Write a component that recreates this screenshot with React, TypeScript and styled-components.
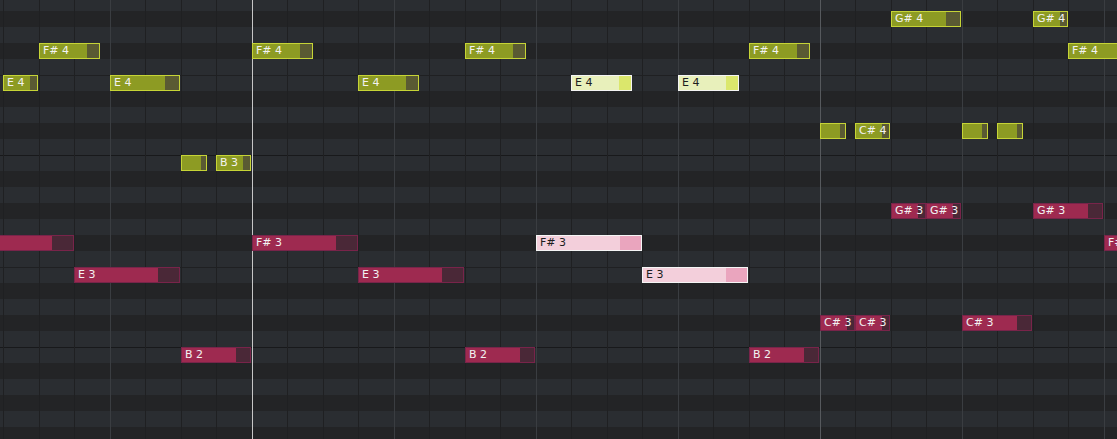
import styled, { createGlobalStyle } from "styled-components";

// piano roll viewport: A4 partially visible at the top, F#2 at the bottom
const BEAT = 35.5;
const ORIGIN_X = 3.5;
const ROW = 16;
const TOP_PITCH = 69; // A4
const ROW_COUNT = 28;
const NAMES = ["C", "C#", "D", "D#", "E", "F", "F#", "G", "G#", "A", "A#", "B"];

const xOf = (beat: number) => Math.floor(ORIGIN_X + BEAT * beat);
const isBlack = (pitch: number) => NAMES[pitch % 12].includes("#");
const labelOf = (pitch: number) => `${NAMES[pitch % 12]} ${Math.floor(pitch / 12) - 1}`;

type Tone = "hi" | "lo";

interface NoteData {
  pitch: number;
  beat: number;
  len: number;
  selected?: boolean;
}

const hiNotes: NoteData[] = [
  { pitch: 68, beat: 25, len: 2 },
  { pitch: 68, beat: 29, len: 1 },
  { pitch: 66, beat: 1, len: 1.75 },
  { pitch: 66, beat: 7, len: 1.75 },
  { pitch: 66, beat: 13, len: 1.75 },
  { pitch: 66, beat: 21, len: 1.75 },
  { pitch: 66, beat: 30, len: 2 },
  { pitch: 64, beat: 0, len: 1 },
  { pitch: 64, beat: 3, len: 2 },
  { pitch: 64, beat: 10, len: 1.75 },
  { pitch: 64, beat: 16, len: 1.75, selected: true },
  { pitch: 64, beat: 19, len: 1.75, selected: true },
  { pitch: 61, beat: 23, len: 0.75 },
  { pitch: 61, beat: 24, len: 1 },
  { pitch: 61, beat: 27, len: 0.75 },
  { pitch: 61, beat: 28, len: 0.75 },
  { pitch: 59, beat: 5, len: 0.75 },
  { pitch: 59, beat: 6, len: 1 },
];

const loNotes: NoteData[] = [
  { pitch: 56, beat: 25, len: 1 },
  { pitch: 56, beat: 26, len: 1 },
  { pitch: 56, beat: 29, len: 2 },
  { pitch: 54, beat: -1, len: 3 },
  { pitch: 54, beat: 7, len: 3 },
  { pitch: 54, beat: 15, len: 3, selected: true },
  { pitch: 54, beat: 31, len: 2 },
  { pitch: 52, beat: 2, len: 3 },
  { pitch: 52, beat: 10, len: 3 },
  { pitch: 52, beat: 18, len: 3, selected: true },
  { pitch: 49, beat: 23, len: 1 },
  { pitch: 49, beat: 24, len: 1 },
  { pitch: 49, beat: 27, len: 2 },
  { pitch: 47, beat: 5, len: 2 },
  { pitch: 47, beat: 13, len: 2 },
  { pitch: 47, beat: 21, len: 2 },
];

const palette = {
  hi: { fill: "#8d9b23", tail: "#5a5a33", border: "#c6d436", text: "#f2f2f2" },
  hiSel: { fill: "#e8f0bb", tail: "#dbe76c", border: "#f4f4f4", text: "#1e1e1e" },
  lo: { fill: "#9e2a50", tail: "#4a2837", border: "#78244a", text: "#f2f2f2" },
  loSel: { fill: "#f3cfdb", tail: "#eaa5be", border: "#f5f5f5", text: "#1e1e1e" },
};

const GlobalStyle = createGlobalStyle`
  html, body {
    margin: 0;
    padding: 0;
    background: #232426;
    overflow: hidden;
  }
`;

const Roll = styled.div`
  position: relative;
  width: 1117px;
  height: 439px;
  overflow: hidden;
  background: #232426;
  font-family: "DejaVu Sans", "Liberation Sans", sans-serif;
`;

const Lanes = styled.div`
  display: flex;
  flex-direction: column;
  margin-top: -5px;
`;

const Lane = styled.div<{ $black: boolean; $edge?: "octave" | "ef" }>`
  flex: none;
  height: ${ROW}px;
  background: ${(p) => (p.$black ? "#232426" : "#2a2d31")};
  box-shadow: ${(p) =>
    p.$edge === "octave"
      ? "inset 0 1px 0 #18191b"
      : p.$edge === "ef"
      ? "inset 0 1px 0 #1f2022"
      : "none"};
`;

const GridLine = styled.div<{ $kind: "beat" | "bar" | "section" | "cursor" }>`
  position: absolute;
  top: 0;
  bottom: 0;
  width: 1px;
  background: ${(p) =>
    ({
      beat: "#1f2022",
      bar: "#3a3d41",
      section: "#56595d",
      cursor: "#c6c6c6",
    }[p.$kind])};
`;

const Note = styled.div<{ $tone: keyof typeof palette; $tail: number }>`
  position: absolute;
  box-sizing: border-box;
  height: ${ROW}px;
  display: flex;
  align-items: center;
  padding-left: 3px;
  overflow: hidden;
  white-space: nowrap;
  border: 1px solid ${(p) => palette[p.$tone].border};
  background: ${(p) => {
    const c = palette[p.$tone];
    return `linear-gradient(to right, ${c.fill} ${100 - p.$tail}%, ${c.tail} ${100 - p.$tail}%)`;
  }};
  color: ${(p) => palette[p.$tone].text};
  font-size: 11px;
  line-height: 14px;
`;

function Grid() {
  const lines = [];
  for (let k = 0; k < 32; k++) {
    let kind: "beat" | "bar" | "section" | "cursor" = "beat";
    if (k % 4 === 3) kind = "bar";
    if (k === 23) kind = "section";
    if (k === 7) kind = "cursor";
    lines.push(<GridLine key={k} $kind={kind} style={{ left: xOf(k) }} />);
  }
  return <>{lines}</>;
}

function Notes({ notes, tone }: { notes: NoteData[]; tone: Tone }) {
  return (
    <>
      {notes.map((n, i) => {
        const left = xOf(n.beat);
        const width = Math.round(n.len * BEAT - 1);
        const top = -5 + (TOP_PITCH - n.pitch) * ROW;
        const key = n.selected ? (tone === "hi" ? "hiSel" : "loSel") : tone;
        // labels of notes that start before the view or are too short stay hidden
        const showLabel = width >= 30 && left >= 0;
        return (
          <Note key={i} $tone={key} $tail={20} style={{ left, top, width }}>
            {showLabel ? labelOf(n.pitch) : null}
          </Note>
        );
      })}
    </>
  );
}

export default function App() {
  const rows = Array.from({ length: ROW_COUNT }, (_, i) => TOP_PITCH - i);
  return (
    <>
      <GlobalStyle />
      <Roll>
        <Lanes>
          {rows.map((p) => (
            <Lane
              key={p}
              $black={isBlack(p)}
              $edge={p % 12 === 11 ? "octave" : p % 12 === 4 ? "ef" : undefined}
            />
          ))}
        </Lanes>
        <Grid />
        <Notes notes={hiNotes} tone="hi" />
        <Notes notes={loNotes} tone="lo" />
      </Roll>
    </>
  );
}
